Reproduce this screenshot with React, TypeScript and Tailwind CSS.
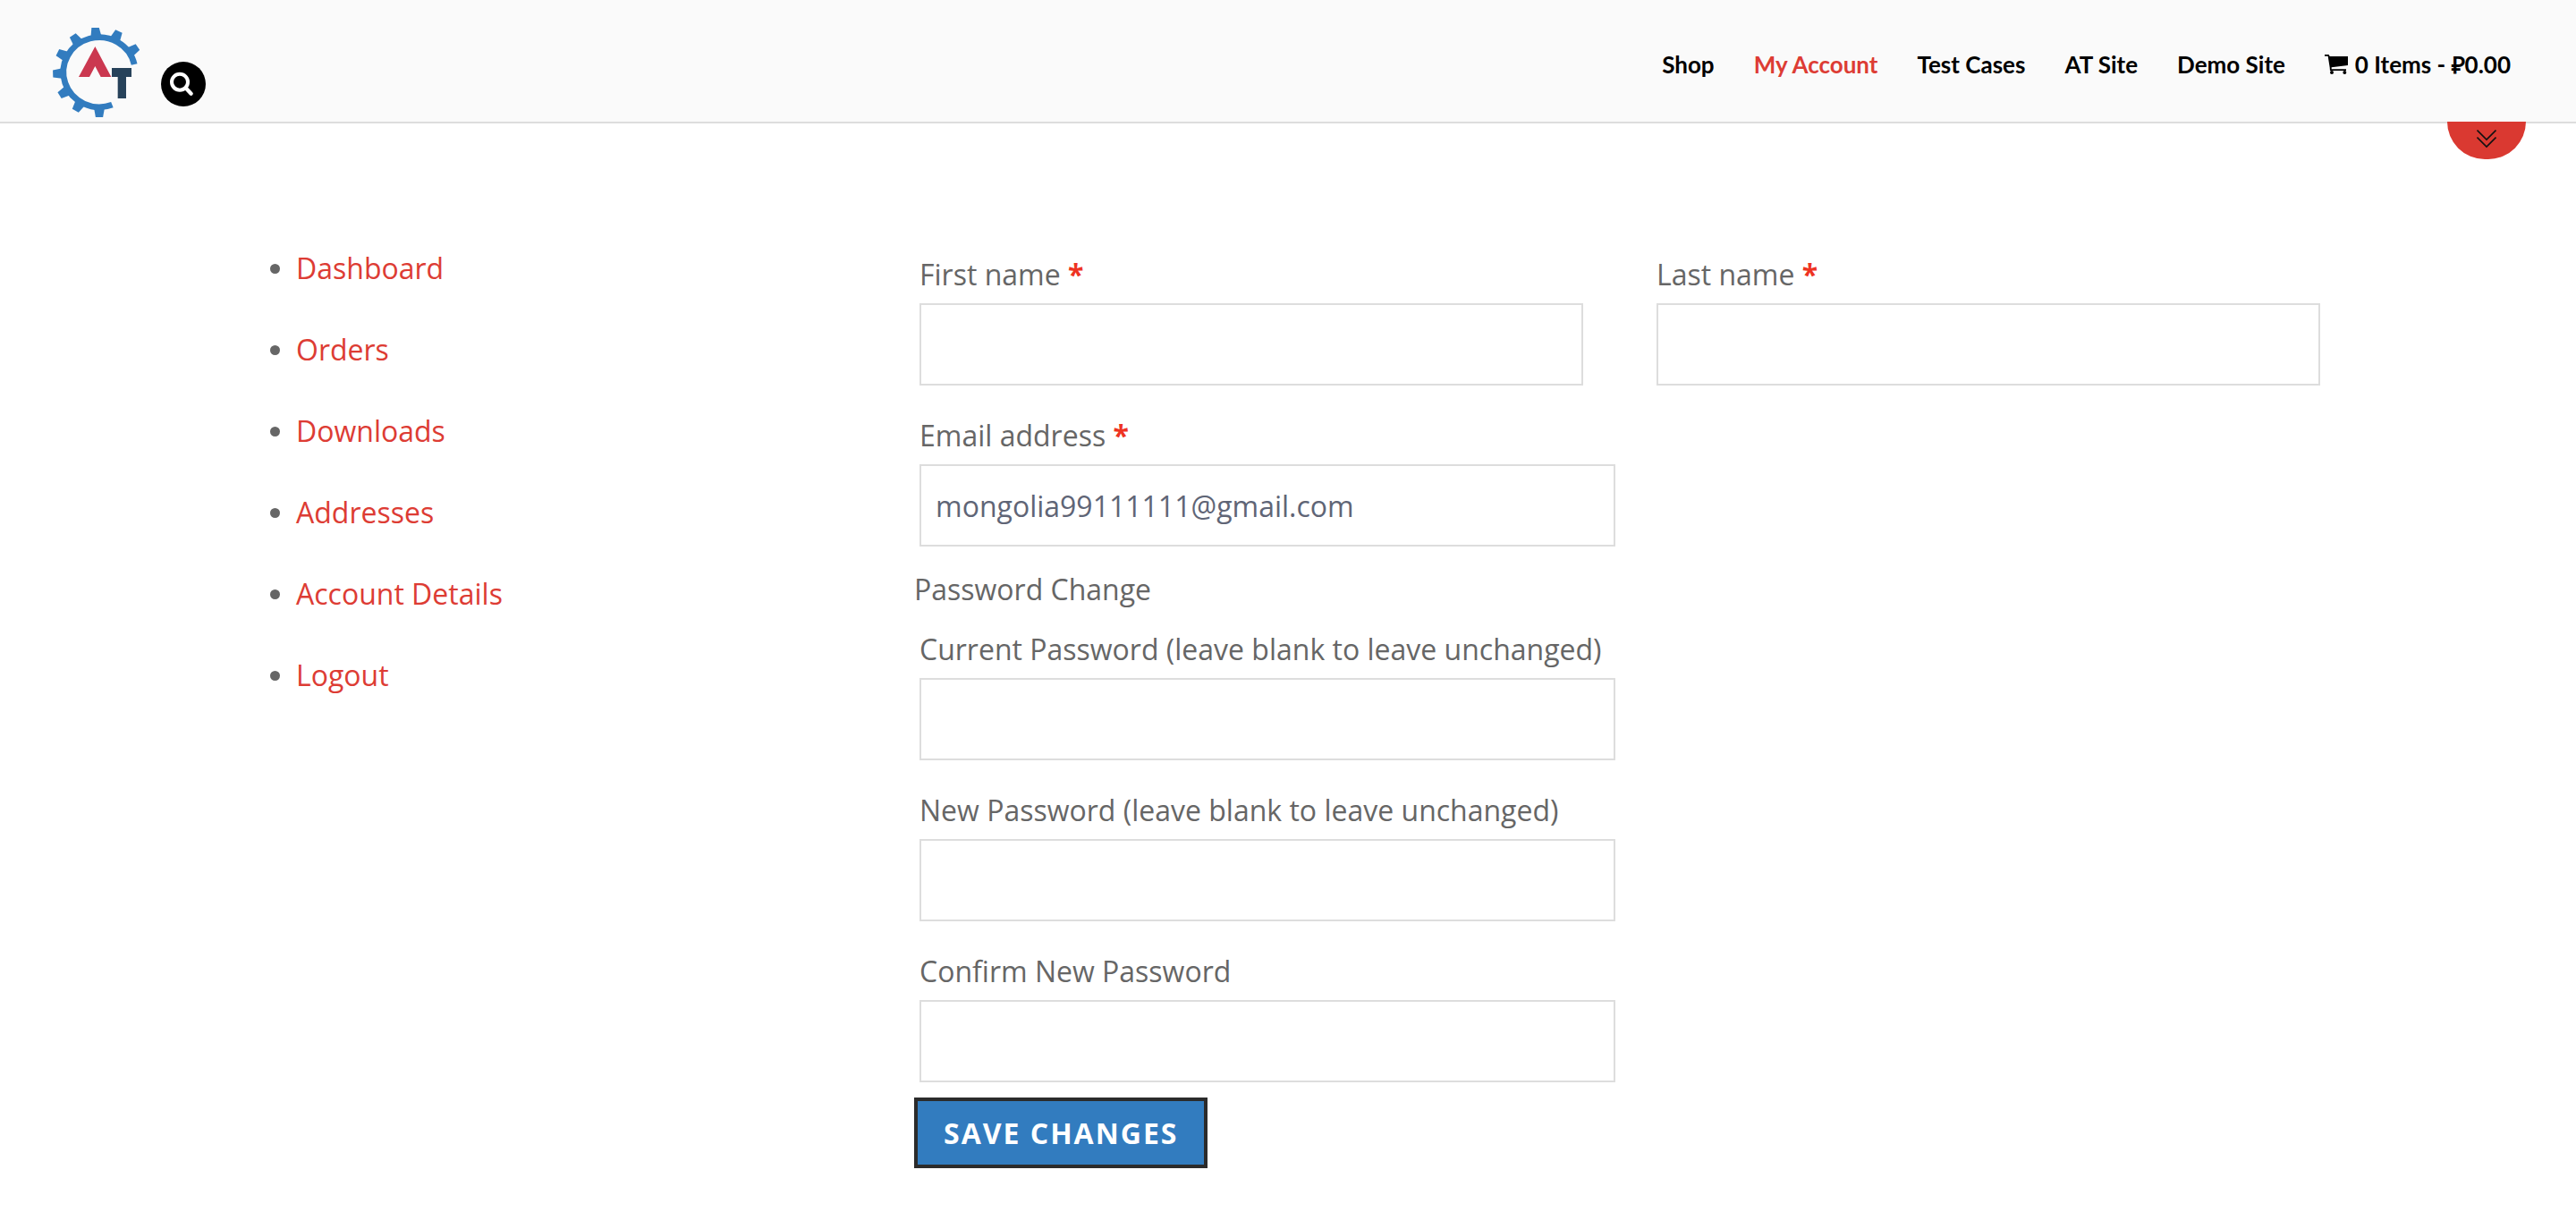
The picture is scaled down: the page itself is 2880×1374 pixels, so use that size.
import React, { type ReactNode } from "react";

const TOOTH_ANGLES = [90, 121, 149, 178, 206, 235, 265, 295, 326];

function Logo() {
  return (
    <svg viewBox="57 63 291 300" className="h-[100px] w-[97px]" role="img" aria-label="AT Site logo">
      <g transform="translate(213 212) scale(1.03 1)">
        <path d="M114 -26.300 A117 117 0 1 0 41.900 109.200" fill="none" stroke="#327cbf" strokeWidth="20" />
        {TOOTH_ANGLES.map((a) => (
          <polygon key={a} points="116,-18 151,-12 151,12 116,18" fill="#327cbf" transform={`rotate(${a})`} />
        ))}
      </g>
      <polygon points="199,126 253,228 218,228 199,192 180,228 144,228" fill="#cb3850" />
      <rect x="255" y="198" width="66" height="30" fill="#27425a" />
      <rect x="275" y="198" width="28" height="102" fill="#27425a" />
    </svg>
  );
}

function SearchIcon() {
  return (
    <svg viewBox="0 0 150 150" className="size-full" fill="none" stroke="#fff" strokeLinecap="round" aria-hidden="true">
      <circle cx="63" cy="68" r="27" strokeWidth="12" />
      <path d="M84 89 L101 107" strokeWidth="13" />
    </svg>
  );
}

function CartIcon() {
  return (
    <svg viewBox="0 0 78 66" className="h-[22px] w-[26px] shrink-0" fill="currentColor" aria-hidden="true">
      <path d="M0 0H14L17 6H78V36L23 43V49H72V54H18L17 43L11 5H0Z" />
      <circle cx="24" cy="60" r="6" />
      <circle cx="67" cy="60" r="6" />
    </svg>
  );
}

function NavLink({ children, active = false }: { children: ReactNode; active?: boolean }) {
  return (
    <a href="#" className={active ? "flex items-center gap-2 text-[#dd3c34]" : "flex items-center gap-2 text-black"}>
      {children}
    </a>
  );
}

function Field({
  id,
  label,
  type = "text",
  required = false,
  value,
}: {
  id: string;
  label: string;
  type?: string;
  required?: boolean;
  value?: string;
}) {
  return (
    <div className="flex flex-col">
      <label htmlFor={id} className="h-16 leading-[64px]">
        {label} {required && <span className="font-bold text-[#ee3322]">*</span>}
      </label>
      <input
        id={id}
        type={type}
        defaultValue={value}
        className="h-[92px] w-full border-2 border-[#dddddd] bg-white px-4 text-[#5f6576] outline-none"
      />
    </div>
  );
}

const ACCOUNT_LINKS = ["Dashboard", "Orders", "Downloads", "Addresses", "Account Details", "Logout"];

export default function App() {
  return (
    <div className="min-h-screen bg-white font-['Open_Sans',sans-serif] text-[32px] text-[#666666]">
      <header className="relative flex h-[138px] justify-between border-b-2 border-[#dddddd] bg-[#fafafa] pl-[59px] pr-[73px]">
        <div className="flex items-start gap-6">
          <a href="#" className="mt-[31px]">
            <Logo />
          </a>
          <button type="button" aria-label="Search" className="mt-[69px] size-[50px] rounded-full bg-black">
            <SearchIcon />
          </button>
        </div>
        <nav className="flex h-36 items-center gap-11 font-['Lato',sans-serif] text-[26px] font-bold">
          <NavLink>Shop</NavLink>
          <NavLink active>My Account</NavLink>
          <NavLink>Test Cases</NavLink>
          <NavLink>AT Site</NavLink>
          <NavLink>Demo Site</NavLink>
          <NavLink>
            <CartIcon />
            0 Items - ₽0.00
          </NavLink>
        </nav>
        <button
          type="button"
          aria-label="Open panel"
          className="absolute right-14 top-[136px] flex h-[42px] w-[88px] justify-center rounded-b-full bg-[#da3931] pt-2"
        >
          <svg viewBox="0 0 22 22" className="size-[22px]" fill="none" stroke="#111" strokeWidth="1.6" aria-hidden="true">
            <path d="M0.500 1.500 L11 12 L21.500 1.500 M0.500 9.500 L11 20 L21.500 9.500" />
          </svg>
        </button>
      </header>

      <main className="grid grid-cols-[736fr_1572fr] px-[286px] pt-[137px]">
        <nav aria-label="Account">
          <ul className="flex flex-col gap-[41px] pl-4">
            {ACCOUNT_LINKS.map((name) => (
              <li key={name} className="flex h-[50px] items-center gap-[18px]">
                <span className="size-[11px] rounded-full bg-[#666666]" />
                <a href="#" className="text-[#dd3c34]">
                  {name}
                </a>
              </li>
            ))}
          </ul>
        </nav>

        <form onSubmit={(e) => e.preventDefault()}>
          <div className="pl-1.5">
            <div className="grid grid-cols-2 gap-[82px]">
              <Field id="first" label="First name" required />
              <Field id="last" label="Last name" required />
            </div>
            <div className="mt-6 max-w-[778px]">
              <Field id="email" label="Email address" type="email" required value="mongolia99111111@gmail.com" />
            </div>
          </div>
          <fieldset>
            <legend className="pb-[11px] pt-6 leading-[48px]">Password Change</legend>
            <div className="ml-1.5 flex max-w-[778px] flex-col gap-6">
              <Field id="current" label="Current Password (leave blank to leave unchanged)" type="password" />
              <Field id="new" label="New Password (leave blank to leave unchanged)" type="password" />
              <Field id="confirm" label="Confirm New Password" type="password" />
            </div>
          </fieldset>
          <button
            type="submit"
            className="mt-[17px] h-[79px] border-4 border-[#2b2b2b] bg-[#327cbf] px-[29px] font-bold uppercase tracking-[2px] text-white"
          >
            Save changes
          </button>
        </form>
      </main>
    </div>
  );
}
